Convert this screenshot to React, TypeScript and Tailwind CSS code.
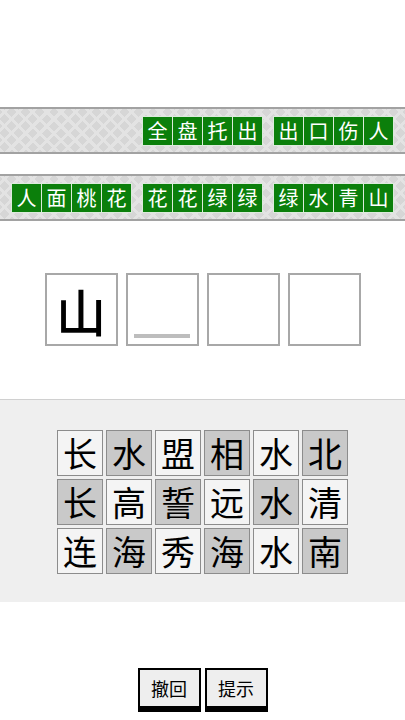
import React from "react";

const font = { fontFamily: '"Noto Sans CJK SC", "Noto Sans", sans-serif' };

function WordGroup({ word }: { word: string }) {
  return (
    <div className="flex gap-px bg-[#dcebdc] p-px">
      {word.split("").map((c, i) => (
        <div
          key={i}
          className="w-[29px] h-[28px] bg-[#0b7f0b] text-white text-[20px] leading-none flex items-center justify-center"
        >
          {c}
        </div>
      ))}
    </div>
  );
}

function Band({ words, align }: { words: string[]; align: "start" | "end" }) {
  return (
    <div
      className={`h-[47px] border-y-2 border-[#a2a2a2] bg-[#d6d6d6] [background-image:repeating-linear-gradient(45deg,#e3e3e3_0_3px,transparent_3px_10px),repeating-linear-gradient(-45deg,#e3e3e3_0_3px,transparent_3px_10px)] flex items-center px-[11px] gap-[10px] ${
        align === "end" ? "justify-end" : "justify-start"
      }`}
    >
      {words.map((w, i) => (
        <WordGroup key={i} word={w} />
      ))}
    </div>
  );
}

const grid = ["长水盟相水北", "长高誓远水清", "连海秀海水南"];

export default function App() {
  return (
    <div className="w-[405px] h-[720px] bg-white flex flex-col overflow-hidden" style={font}>
      <div className="h-[107px] shrink-0" />
      <Band words={["全盘托出", "出口伤人"]} align="end" />
      <div className="h-[20px] shrink-0" />
      <Band words={["人面桃花", "花花绿绿", "绿水青山"]} align="start" />
      <div className="h-[52px] shrink-0" />
      <div className="flex justify-center gap-[8px] shrink-0">
        <div className="w-[73px] h-[73px] border-2 border-[#a8a8a8] flex items-center justify-center text-[50px] font-medium leading-none text-black">
          山
        </div>
        <div className="w-[73px] h-[73px] border-2 border-[#a8a8a8] flex items-end justify-center pb-[6px]">
          <div className="w-[56px] h-[4px] bg-[#bdbdbd]" />
        </div>
        <div className="w-[73px] h-[73px] border-2 border-[#a8a8a8]" />
        <div className="w-[73px] h-[73px] border-2 border-[#a8a8a8]" />
      </div>
      <div className="h-[53px] shrink-0" />
      <div className="h-[203px] shrink-0 bg-[#efefef] border-t border-[#d0d0d0] flex justify-center pt-[30px]">
        <div className="grid grid-cols-6 gap-[3px] h-fit">
          {grid.map((row, r) =>
            row.split("").map((c, i) => {
              const dark = (r + i) % 2 === 1;
              return (
                <div
                  key={`${r}-${i}`}
                  className={`w-[46px] h-[46px] border border-[#8c8c8c] flex items-center justify-center text-[34px] leading-none text-black ${
                    dark ? "bg-[#c9c9c9]" : "bg-[#f4f4f4]"
                  }`}
                >
                  {c}
                </div>
              );
            })
          )}
        </div>
      </div>
      <div className="h-[66px] shrink-0" />
      <div className="flex justify-center gap-[4px] shrink-0">
        <button className="w-[63px] h-[44px] bg-[#eeeeee] border-2 border-black border-b-[6px] text-[18px] leading-none text-black flex items-center justify-center">
          撤回
        </button>
        <button className="w-[63px] h-[44px] bg-[#eeeeee] border-2 border-black border-b-[6px] text-[18px] leading-none text-black flex items-center justify-center">
          提示
        </button>
      </div>
    </div>
  );
}
